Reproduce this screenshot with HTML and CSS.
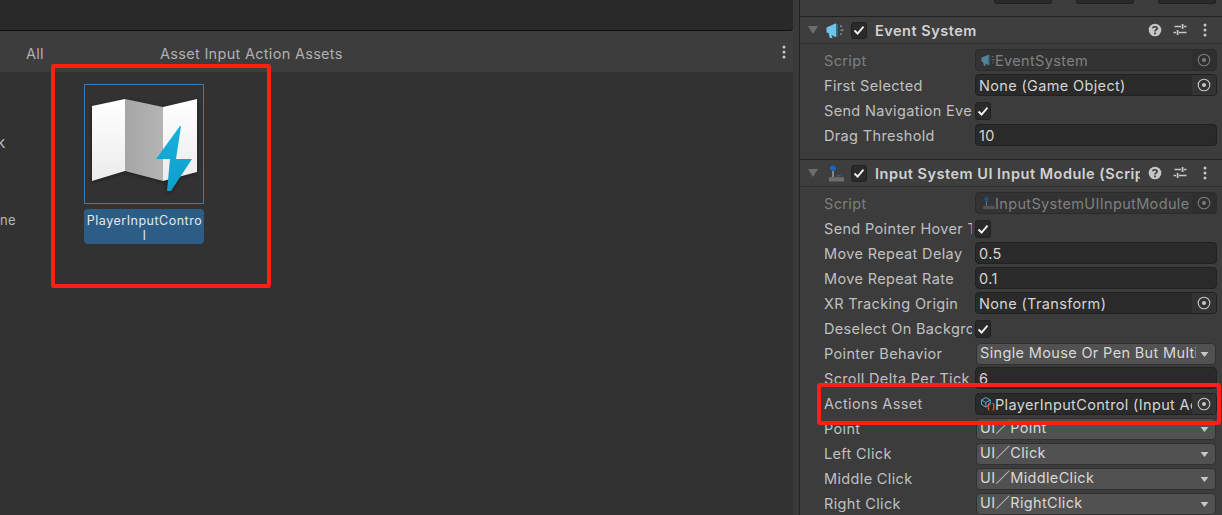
FILE: index.html
```html
<!DOCTYPE html>
<html lang="en">
<head>
<meta charset="utf-8">
<title>Unity Input System</title>
<link rel="stylesheet" href="styles.css">
</head>
<body>
<svg class="defs" width="0" height="0" aria-hidden="true">
  <defs>
    <symbol id="check" viewBox="0 0 14 14"><path d="M2.5 7.5 5.6 10.5 11.5 3.6" fill="none" stroke="#f0f0f0" stroke-width="1.9"/></symbol>
    <symbol id="speaker" viewBox="0 0 18 16"><path d="M.5 5 10 .8V14.8L5.500 12.500 6.500 15.500H3.800L2.500 10.500.5 10Z" fill="#6fc4ea"/><path d="M10 1.500h2V14h-2z" fill="#2f6c88"/><path d="M14 3h2v1.300h-2zM14.500 7h3v1.300h-3zM14 11h2v1.300h-2z" fill="#9a9a9a"/></symbol>
    <symbol id="joystick" viewBox="0 0 18 17"><path d="M7 .2 10 1.800V4.600L7 6.200 4 4.600V1.800Z" fill="#1265c2"/><path d="M6.300 6h1.500v6.200H6.300z" fill="#9c9c9c"/><path d="M11 10h4v1.400h-4z" fill="#1265c2"/><path d="M3 12.200h15V16.500H3z" fill="#6c6c6c"/></symbol>
    <symbol id="target" viewBox="0 0 14 14"><circle cx="7" cy="7" r="5.800" fill="none" stroke="currentColor" stroke-width="1.100"/><circle cx="7" cy="7" r="2" fill="currentColor"/></symbol>
    <symbol id="caret" viewBox="0 0 12 7"><path d="M.5 0H11.500L6 7Z" fill="#c8c8c8"/></symbol>
    <symbol id="help" viewBox="0 0 14 14"><circle cx="7" cy="7" r="6.300" fill="#c6c6c6"/><path d="M4.900 5.300C5 3.200 9.100 3.200 9.100 5.400 9.100 7 7 6.800 7 8.500" fill="none" stroke="#3c3c3c" stroke-width="1.700"/><path d="M6.100 9.600h1.800v1.700H6.100z" fill="#3c3c3c"/></symbol>
    <symbol id="sliders" viewBox="0 0 14 14"><path d="M1.500 3.500H8M11 3.500h2.500M.5 9.500H3M6 9.500h7.500" stroke="#c6c6c6" stroke-width="1.300"/><path d="M8.700 1h1.800v5H8.700zM3.700 7h1.800v5H3.700z" fill="#c6c6c6"/></symbol>
    <symbol id="kebab" viewBox="0 0 4 14"><circle cx="2" cy="2" r="1.500" fill="#c6c6c6"/><circle cx="2" cy="7" r="1.500" fill="#c6c6c6"/><circle cx="2" cy="12" r="1.500" fill="#c6c6c6"/></symbol>
  </defs>
</svg>

<div class="app">
  <main class="browser">
    <div class="top-strip"></div>
    <div class="filter-bar">
      <span class="filter-all">All</span>
      <span class="filter-type">Asset Input Action Assets</span>
      <svg class="kebab-bar"><use href="#kebab"/></svg>
    </div>
    <div class="browser-body">
      <div class="tree">
        <span class="tree-k">k</span>
        <span class="tree-ne">ne</span>
      </div>
      <div class="asset">
        <div class="asset-thumb">
          <svg class="asset-map" viewBox="84 84 120 120">
            <defs>
              <linearGradient id="paper" x1="0" y1="0" x2="0" y2="1"><stop offset="0" stop-color="#ffffff"/><stop offset="1" stop-color="#ececec"/></linearGradient>
              <linearGradient id="fold" x1="0" y1="0" x2="1" y2="0"><stop offset="0" stop-color="#a6a6a6"/><stop offset="1" stop-color="#b4b4b4"/></linearGradient>
              <linearGradient id="bolt" x1="0" y1="0" x2="0" y2="1"><stop offset="0" stop-color="#18b0dc"/><stop offset="1" stop-color="#0f9fcb"/></linearGradient>
            </defs>
            <path d="M92 106 125 99 125 171 92 181Z" fill="url(#paper)"/>
            <path d="M125 99 163 107 163 181 125 171Z" fill="url(#fold)"/>
            <path d="M163 107 197 99 197 172 163 181Z" fill="url(#paper)"/>
            <path d="M180 126 181 126 176 159 192 159 171 191 167 191 170 159 156 159Z" fill="url(#bolt)"/>
          </svg>
        </div>
        <div class="asset-label">PlayerInputContro<br>l</div>
      </div>
    </div>
  </main>

  <aside class="inspector">
    <div class="inspector-top">
      <span class="top-btn"></span><span class="top-btn"></span><span class="top-btn"></span>
    </div>

    <section class="component">
      <header class="comp-head">
        <span class="fold"></span>
        <svg class="comp-icon"><use href="#speaker"/></svg>
        <span class="toggle"><svg class="check"><use href="#check"/></svg></span>
        <span class="comp-title">Event System</span>
        <svg class="tool tool-help"><use href="#help"/></svg>
        <svg class="tool tool-sliders"><use href="#sliders"/></svg>
        <svg class="tool-kebab"><use href="#kebab"/></svg>
      </header>
      <div class="comp-body">
        <div class="row muted"><span class="lbl">Script</span><div class="field obj"><svg class="obj-icon"><use href="#speaker"/></svg><span class="val">EventSystem</span><span class="pick"><svg class="target"><use href="#target"/></svg></span></div></div>
        <div class="row"><span class="lbl">First Selected</span><div class="field obj"><span class="val plain">None (Game Object)</span><span class="pick"><svg class="target"><use href="#target"/></svg></span></div></div>
        <div class="row"><span class="lbl">Send Navigation Events</span><span class="toggle"><svg class="check"><use href="#check"/></svg></span></div>
        <div class="row"><span class="lbl">Drag Threshold</span><div class="field"><span class="val plain">10</span></div></div>
      </div>
    </section>

    <section class="component">
      <header class="comp-head">
        <span class="fold"></span>
        <svg class="comp-icon"><use href="#joystick"/></svg>
        <span class="toggle"><svg class="check"><use href="#check"/></svg></span>
        <span class="comp-title">Input System UI Input Module (Script)</span>
        <svg class="tool tool-help"><use href="#help"/></svg>
        <svg class="tool tool-sliders"><use href="#sliders"/></svg>
        <svg class="tool-kebab"><use href="#kebab"/></svg>
      </header>
      <div class="comp-body">
        <div class="row muted"><span class="lbl">Script</span><div class="field obj"><svg class="obj-icon"><use href="#joystick"/></svg><span class="val">InputSystemUIInputModule</span><span class="pick"><svg class="target"><use href="#target"/></svg></span></div></div>
        <div class="row"><span class="lbl">Send Pointer Hover To Parent</span><span class="toggle"><svg class="check"><use href="#check"/></svg></span></div>
        <div class="row"><span class="lbl">Move Repeat Delay</span><div class="field"><span class="val plain">0.5</span></div></div>
        <div class="row"><span class="lbl">Move Repeat Rate</span><div class="field"><span class="val plain">0.1</span></div></div>
        <div class="row"><span class="lbl">XR Tracking Origin</span><div class="field obj"><span class="val plain">None (Transform)</span><span class="pick"><svg class="target"><use href="#target"/></svg></span></div></div>
        <div class="row"><span class="lbl">Deselect On Background</span><span class="toggle"><svg class="check"><use href="#check"/></svg></span></div>
        <div class="row"><span class="lbl">Pointer Behavior</span><div class="drop"><span class="drop-val">Single Mouse Or Pen But Multi Touch</span><svg class="caret"><use href="#caret"/></svg></div></div>
        <div class="row"><span class="lbl">Scroll Delta Per Tick</span><div class="field"><span class="val plain">6</span></div></div>
        <div class="row"><span class="lbl">Actions Asset</span><div class="field obj field-low"><svg class="obj-icon" viewBox="0 0 14 14"><path d="M.5 3 4.800.5 9.200 3V7.500L4.800 10 .5 7.500ZM.5 3 4.800 5.500 9.200 3M4.800 5.500V10" fill="none" stroke="#56aed2" stroke-width="1"/><path d="M8.500 6.500Q7.300 6.500 7.300 8V11.500Q7.300 13 8.500 13M11.500 6.500Q12.800 6.500 12.800 8V11.500Q12.800 13 11.500 13" fill="none" stroke="#ee5a26" stroke-width="1.300"/></svg><span class="val bright">PlayerInputControl (Input Action Asset)</span><span class="pick"><svg class="target"><use href="#target"/></svg></span></div></div>
        <div class="row"><span class="lbl">Point</span><div class="drop"><span class="drop-val cjk">UI／Point</span><svg class="caret"><use href="#caret"/></svg></div></div>
        <div class="row"><span class="lbl">Left Click</span><div class="drop"><span class="drop-val cjk">UI／Click</span><svg class="caret"><use href="#caret"/></svg></div></div>
        <div class="row"><span class="lbl">Middle Click</span><div class="drop"><span class="drop-val cjk">UI／MiddleClick</span><svg class="caret"><use href="#caret"/></svg></div></div>
        <div class="row"><span class="lbl">Right Click</span><div class="drop"><span class="drop-val cjk">UI／RightClick</span><svg class="caret"><use href="#caret"/></svg></div></div>
      </div>
    </section>
  </aside>
</div>

<div class="mark mark-asset"></div>
<div class="mark mark-field"></div>
</body>
</html>
```

FILE: styles.css
```css
* { box-sizing: border-box; }
html, body { margin: 0; height: 515px; overflow: hidden; }
body { background: #323232; font-family: Inter, "Noto Sans CJK SC", sans-serif; font-size: 14.5px; letter-spacing: .35px; color: #c4c4c4; position: relative; }
.defs { display: block; height: 0; }
.app { display: flex; height: 515px; }

/* project browser */
.browser { width: 793px; flex: none; display: flex; flex-direction: column; }
.top-strip { height: 31px; background: #292929; border-bottom: 1px solid #111; border-bottom-right-radius: 4px; flex: none; }
.filter-bar { height: 41px; flex: none; background: #3d3d3d; display: flex; align-items: center; padding-top: 4px; color: #b0b0b0; letter-spacing: .3px; }
.filter-all { margin-left: 26px; width: 134px; }
.filter-type { flex: 1; }
.kebab-bar { width: 4px; height: 14px; margin-right: 7px; margin-top: -4px; }
.browser-body { flex: 1; display: flex; }
.tree { width: 84px; flex: none; padding-top: 62px; font-size: 13px; color: #b9b9b9; display: flex; flex-direction: column; overflow: hidden; }
.tree-k { margin-left: -3px; line-height: 18px; font-size: 15px; }
.tree-ne { margin-top: 59px; line-height: 18px; }
.asset { padding-top: 12px; width: 120px; }
.asset-thumb { width: 120px; height: 120px; border: 1px solid #3a79b9; }
.asset-map { display: block; width: 120px; height: 120px; margin: -1px; filter: drop-shadow(0 1px 2px rgba(0,0,0,.4)); }
.asset-label { margin-top: 5px; height: 35px; background: #2c5d87; border-radius: 4px; color: #e8e8e8; font-size: 12.5px; line-height: 15px; letter-spacing: .5px; text-align: center; padding-top: 4px; padding-left: 1px; white-space: nowrap; overflow: hidden; }

/* inspector */
.inspector { flex: 1; min-width: 0; background: linear-gradient(to right, #3a3a3a 0, #3a3a3a 6px, #232323 6px, #232323 7px, #3c3c3c 7px); padding-left: 7px; }
.inspector-top { height: 16px; display: flex; padding-left: 194px; gap: 24px; }
.top-btn { width: 58px; height: 4px; background: #292929; border: 1px solid #1f1f1f; border-top: 0; border-radius: 0 0 3px 3px; }
.component { padding-bottom: 11px; }
.comp-head { height: 28px; border-top: 1px solid #232323; border-bottom: 1px solid #303030; background: #3e3e3e; display: flex; align-items: center; padding-left: 8px; }
.fold { width: 0; height: 0; flex: none; border-style: solid; border-width: 8px 5.5px 0; border-color: #6d6d6d transparent transparent; }
.comp-icon { width: 18px; height: 17px; margin-left: 8px; flex: none; }
.toggle { width: 16px; height: 17px; background: #2a2a2a; border: 1px solid #212121; border-radius: 3px; flex: none; display: flex; align-items: center; justify-content: center; }
.check { width: 14px; height: 14px; }
.comp-head .toggle { margin-left: 7px; }
.row > .toggle { height: 18px; margin-top: 3px; }
.comp-title { margin-left: 8px; width: 265px; flex: none; font-weight: 600; letter-spacing: .5px; color: #d2d2d2; white-space: nowrap; overflow: hidden; }
.tool { width: 14px; height: 14px; flex: none; }
.tool-help { margin-left: 8px; }
.tool-sliders { margin-left: 11px; }
.tool-kebab { width: 4px; height: 14px; margin-left: 16px; flex: none; }
.comp-body { padding-top: 4px; }
.row { height: 25px; display: flex; align-items: flex-start; padding-left: 24px; padding-top: 1px; }
.lbl { width: 148px; margin-right: 3px; flex: none; line-height: 22px; padding-top: 1px; white-space: nowrap; overflow: hidden; color: #c0c0c0; }
.muted .lbl { color: #7f7f7f; }
.field { width: 242px; height: 22px; background: #2a2a2a; border: 1px solid #212121; border-radius: 4px; display: flex; align-items: center; padding-left: 3px; overflow: hidden; }
.field-low { margin-top: 1px; }
.muted .field { background: #333; border-color: #2b2b2b; }
.val { flex: 1; min-width: 0; white-space: nowrap; overflow: hidden; line-height: 22px; height: 20px; }
.val.plain { color: #d4d4d4; }
.val.bright { color: #d4d4d4; }
.muted .val { color: #808080; }
.obj-icon { width: 14px; height: 14px; margin-left: 2px; flex: none; }
.muted .obj-icon { opacity: .55; }
.pick { width: 24px; height: 20px; background: #333; display: flex; align-items: center; justify-content: center; color: #c8c8c8; flex: none; }
.muted .pick { color: #7c7c7c; background: #2f2f2f; }
.target { width: 14px; height: 14px; }
.drop { width: 240px; margin-left: 1px; margin-top: 1px; height: 22px; background: #515151; border: 1px solid #303030; border-radius: 4px; display: flex; align-items: center; padding-left: 3px; padding-right: 6px; }
.drop-val { flex: 1; min-width: 0; white-space: nowrap; overflow: hidden; color: #d8d8d8; line-height: 18px; height: 20px; }
.drop-val.cjk { line-height: 17px; }
.caret { width: 9px; height: 5px; margin-left: 4px; flex: none; }

/* annotations */
.mark { position: absolute; border: 4px solid #ff2015; border-radius: 3px; pointer-events: none; }
.mark-asset { left: 51px; top: 64px; width: 220px; height: 224px; }
.mark-field { left: 817px; top: 383px; width: 404px; height: 42px; }
```
